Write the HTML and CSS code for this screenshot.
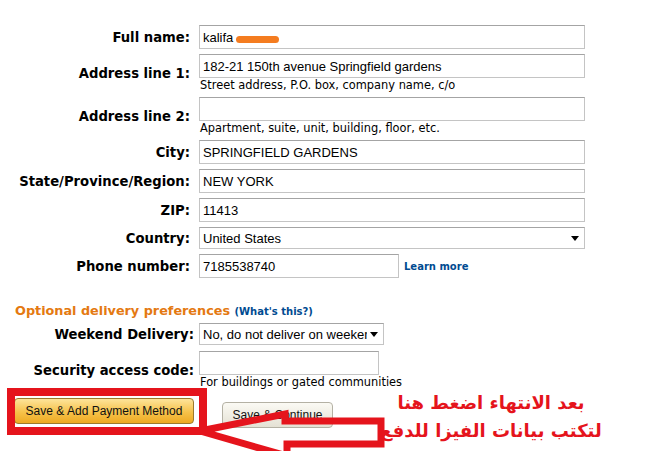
FILE: index.html
```html
<!DOCTYPE html>
<html lang="en">
<head>
<meta charset="UTF-8"/>
<title>Enter a new shipping address</title>
<link rel="stylesheet" href="styles.css">
</head>
<body>

<div class="page">
  <div class="form-grid">
    <label>Full name:</label>
    <div class="field">
      <div class="redact-wrap">
        <input type="text" value="kalifa">
        <span class="redact"></span>
      </div>
    </div>

    <label>Address line 1:</label>
    <div class="field">
      <input type="text" value="182-21 150th avenue Springfield gardens">
      <div class="hint">Street address, P.O. box, company name, c/o</div>
    </div>

    <label>Address line 2:</label>
    <div class="field">
      <input type="text" value="">
      <div class="hint">Apartment, suite, unit, building, floor, etc.</div>
    </div>

    <label>City:</label>
    <div class="field"><input type="text" value="SPRINGFIELD GARDENS"></div>

    <label>State/Province/Region:</label>
    <div class="field"><input type="text" value="NEW YORK"></div>

    <label>ZIP:</label>
    <div class="field"><input type="text" value="11413"></div>

    <label>Country:</label>
    <div class="field">
      <div class="select-wrap">
        <select><option>United States</option></select>
      </div>
    </div>

    <label>Phone number:</label>
    <div class="field phone-row">
      <input type="text" class="phone" value="7185538740">
      <a class="link">Learn more</a>
    </div>
  </div>

  <h3 class="section-title">Optional delivery preferences <a class="link">(What's this?)</a></h3>

  <div class="form-grid opt">
    <label>Weekend Delivery:</label>
    <div class="field">
      <div class="select-wrap weekend">
        <select><option>No, do not deliver on weekends</option></select>
      </div>
    </div>

    <label>Security access code:</label>
    <div class="field">
      <input type="text" class="code" value="">
      <div class="hint">For buildings or gated communities</div>
    </div>
  </div>

  <div class="buttons">
    <button class="btn primary">Save &amp; Add Payment Method</button>
    <button class="btn secondary">Save &amp; Continue</button>
  </div>
</div>

<svg class="marks" width="655" height="451" viewBox="0 0 655 451">
  <rect x="11" y="392" width="192" height="39" fill="none" stroke="#e5141c" stroke-width="8"/>
  <polygon points="200,431 285,414 285,421 381,421 381,444 287,444 287,456"
    fill="none" stroke="#e5141c" stroke-width="7" stroke-linejoin="miter"/>
</svg>
<div class="note" dir="rtl">بعد الانتهاء اضغط هنا<br>لتكتب بيانات الفيزا للدفع</div>

</body>
</html>
```

FILE: styles.css
```css
body {
  margin: 0; background: #fff; color: #000;
  font-family: "DejaVu Sans", Verdana, sans-serif;
}
.page { padding: 25px 0 0 0; width: 655px; height: 426px; overflow: hidden; }

.form-grid {
  display: grid;
  grid-template-columns: 190px 386px;
  column-gap: 9px; row-gap: 5px;
  align-items: center;
}
.form-grid.opt {
  grid-template-columns: 194px 386px;
  column-gap: 5px; row-gap: 6px;
}
.form-grid label {
  text-align: right; font-weight: bold; font-size: 13.2px; white-space: nowrap;
}
.field input, .field select {
  box-sizing: border-box; width: 386px; height: 24px;
  border: 1px solid #c4c4c4; border-top-color: #a4a4a4;
  padding: 0 3px; margin: 0;
  font-family: "Liberation Sans", Arial, sans-serif; font-size: 13px; color: #000;
  background: #fff; outline: none; display: block;
}
.hint { font-size: 11.4px; height: 14px; line-height: 14px; padding-left: 1px; color: #000; white-space: nowrap; }

.redact-wrap { position: relative; }
.redact {
  position: absolute; left: 37px; top: 11px; width: 43px; height: 7px;
  background: #f47c20; border-radius: 4px;
}

.select-wrap { position: relative; width: 386px; }
.select-wrap select { appearance: none; height: 22px; padding-left: 3px; }
.select-wrap::after {
  content: ""; position: absolute; right: 6px; top: 9px;
  border-left: 4px solid transparent; border-right: 4px solid transparent;
  border-top: 5px solid #000;
}
.select-wrap.weekend { width: 185px; }
.select-wrap.weekend select { width: 185px; padding-right: 16px; }

.phone-row { display: flex; align-items: center; gap: 5px; }
.field input.phone { width: 200px; }
.field input.code { width: 180px; }

.link {
  color: #004b91; font-weight: bold; font-size: 10px; text-decoration: none;
  font-family: "DejaVu Sans", Verdana, sans-serif;
}
.section-title {
  margin: 25px 0 5px 15px; font-size: 12.8px; color: #e47911; font-weight: bold;
}

.buttons { display: flex; align-items: flex-start; gap: 28px; margin: 9px 0 0 14px; }
.btn {
  font-family: "Liberation Sans", Arial, sans-serif; font-size: 12px; color: #111;
  border-radius: 4px; cursor: pointer; padding: 0;
}
.btn.primary {
  width: 180px; height: 26px;
  background: linear-gradient(#fde49a, #f6c24a 55%, #eeaa22);
  border: 1px solid #9c7a2c;
}
.btn.secondary {
  width: 111px; height: 26px; margin-top: 4px;
  background: linear-gradient(#fbfaf4, #e4e1d4);
  border: 1px solid #b4b1a4;
}

.marks { position: absolute; left: 0; top: 0; pointer-events: none; }
.note {
  position: absolute; left: 380px; top: 389px; width: 222px;
  text-align: center; color: #e5141c; font-weight: bold; white-space: nowrap;
  font-size: 18px; line-height: 28px;
  font-family: "DejaVu Sans", sans-serif;
}
```
